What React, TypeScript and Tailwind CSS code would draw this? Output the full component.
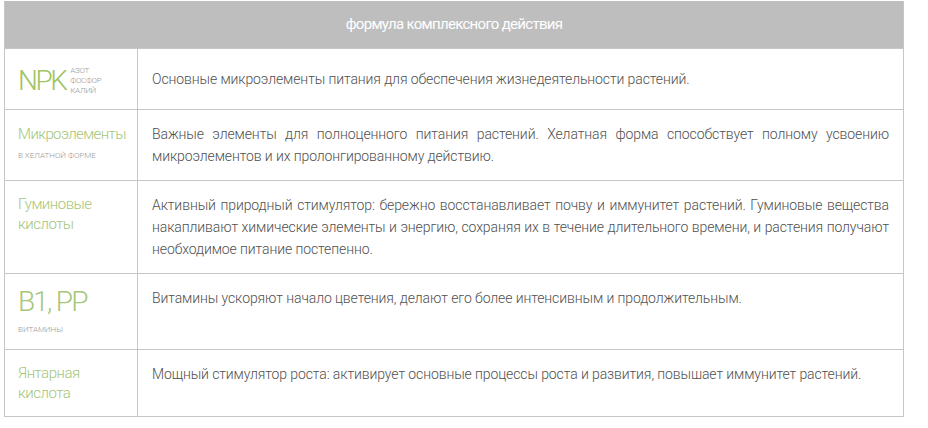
const rows = [
  {
    h: "h-[61px]",
    left: (
      <div className="flex items-center gap-[5px] pt-[3px]">
        <span className="text-[28px] leading-[30px] text-[#9fc463] tracking-[-2.5px]">NPK</span>
        <span className="flex flex-col text-[8px] leading-[10px] text-[#9a9a9a] uppercase tracking-[-0.3px]">
          <span>Азот</span>
          <span>Фосфор</span>
          <span>Калий</span>
        </span>
      </div>
    ),
    text: "Основные микроэлементы питания для обеспечения жизнедеятельности растений.",
    center: true,
  },
  {
    h: "h-[71px]",
    left: (
      <div className="flex flex-col">
        <span className="text-[15px] leading-[22px] text-[#a6c67a] tracking-[-0.6px]">Микроэлементы</span>
        <span className="text-[8px] leading-[10px] mt-[6px] text-[#9a9a9a] uppercase">в хелатной форме</span>
      </div>
    ),
    text: "Важные элементы для полноценного питания растений. Хелатная форма способствует полному усвоению микроэлементов и их пролонгированному действию.",
  },
  {
    h: "h-[93px]",
    left: (
      <div className="text-[15px] leading-[20px] text-[#a6c67a] tracking-[-0.5px]">
        Гуминовые
        <br />
        кислоты
      </div>
    ),
    text: "Активный природный стимулятор: бережно восстанавливает почву и иммунитет растений. Гуминовые вещества накапливают химические элементы и энергию, сохраняя их в течение длительного времени, и растения получают необходимое питание постепенно.",
  },
  {
    h: "h-[76px]",
    left: (
      <div className="flex flex-col">
        <span className="text-[28px] leading-[30px] text-[#a6c67a] tracking-[-1.8px]">B1, PP</span>
        <span className="text-[8px] leading-[10px] mt-[8px] text-[#9a9a9a] uppercase">витамины</span>
      </div>
    ),
    text: "Витамины ускоряют начало цветения, делают его более интенсивным и продолжительным.",
  },
  {
    h: "h-[67px]",
    left: (
      <div className="text-[15px] leading-[20px] text-[#a6c67a] tracking-[-0.5px]">
        Янтарная
        <br />
        кислота
      </div>
    ),
    text: "Мощный стимулятор роста: активирует основные процессы роста и развития, повышает иммунитет растений.",
  },
];

export default function App() {
  return (
    <div className="w-[928px] h-[428px] bg-white pt-[1px] pl-[4px] font-['Roboto',sans-serif] font-light">
      <div className="w-[900px] border border-[#c6c6c6] border-t-0">
        <div className="h-[47px] bg-[#bebebe] flex items-center justify-center text-white text-[15px] font-normal tracking-[-0.7px]">
          формула комплексного действия
        </div>
        {rows.map((r, i) => (
          <div key={i} className={`flex ${r.h} border-t border-[#c6c6c6] first:border-t-0`}>
            <div className={`w-[133px] shrink-0 border-r border-[#c6c6c6] pl-[13px] ${i === 0 ? "flex items-center" : "pt-[13px]"}`}>
              {r.left}
            </div>
            <div
              className={`flex-1 pl-[14px] pr-[14px] text-[14px] leading-[22px] text-[#505050] text-justify tracking-[-0.1px] ${
                r.center ? "flex items-center" : "pt-[13px]"
              }`}
            >
              {r.text}
            </div>
          </div>
        ))}
      </div>
    </div>
  );
}
